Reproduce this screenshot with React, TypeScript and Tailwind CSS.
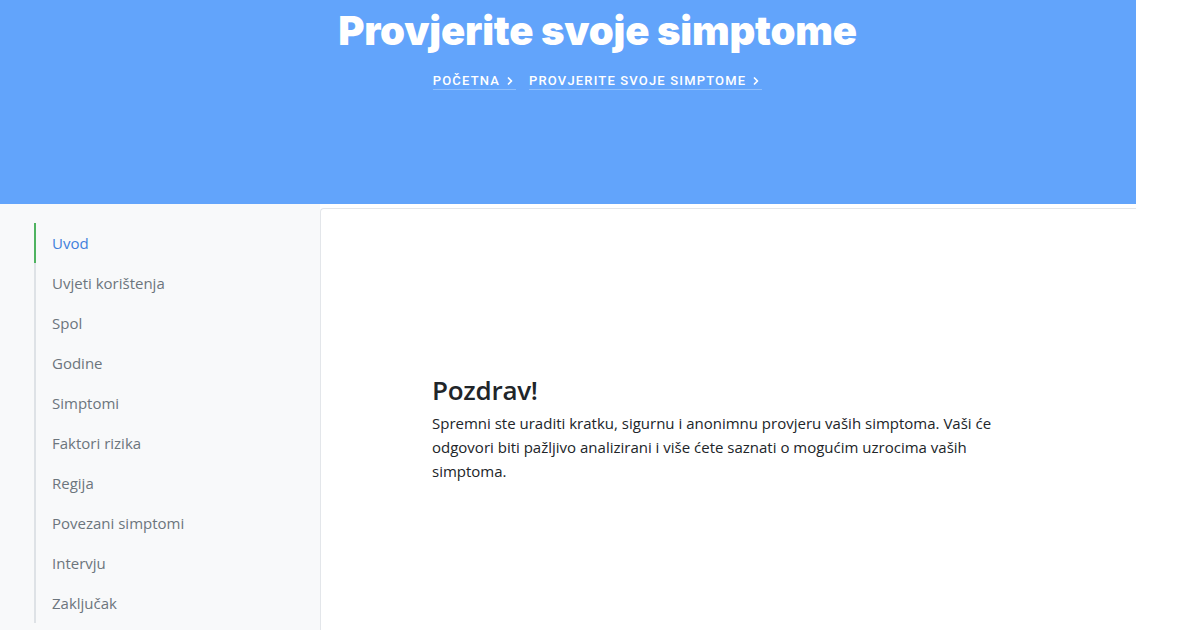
import { ChevronRight } from 'lucide-react'

const steps = [
  'Uvod',
  'Uvjeti korištenja',
  'Spol',
  'Godine',
  'Simptomi',
  'Faktori rizika',
  'Regija',
  'Povezani simptomi',
  'Intervju',
  'Zaključak',
]

function Crumb({ label }: { label: string }) {
  return (
    <a className="flex items-center gap-[4px] border-b border-[#8fbffc] pb-[1px] font-['Roboto',sans-serif] text-[13px] font-medium uppercase leading-[15px] tracking-[0.09em] text-white">
      {label}
      <ChevronRight size={12} strokeWidth={3.5} />
    </a>
  )
}

export default function App() {
  return (
    <div className="h-[630px] w-[1200px] overflow-hidden bg-white font-['Open_Sans',sans-serif]">
      <div className="w-[1136px]">
        <header className="flex h-[204px] flex-col items-center bg-[#62a4fb] pl-[59px] pt-[7px]">
          <h1 className="font-['Inter',sans-serif] text-[40px] font-black leading-[48px] tracking-[-0.005em] text-white">
            Provjerite svoje simptome
          </h1>
          <nav className="mt-[18px] flex items-center gap-[13px]">
            <Crumb label="Početna" />
            <Crumb label="Provjerite svoje simptome" />
          </nav>
        </header>

        <div className="flex">
          <aside className="h-[426px] w-[320px] shrink-0 bg-[#f8f9fa] pt-[19px]">
            <ul className="ml-[34px] border-l-2 border-[#dee2e6]">
              {steps.map((step, i) => (
                <li
                  key={step}
                  className={
                    i === 0
                      ? '-ml-[2px] flex h-10 items-center border-l-2 border-[#4fb360] pl-[16px] text-[15px] text-[#3f7fdc]'
                      : 'flex h-10 items-center pl-[16px] text-[15px] text-[#6c757d]'
                  }
                >
                  {step}
                </li>
              ))}
            </ul>
          </aside>

          <main className="mt-[4px] h-[430px] flex-1 rounded-tl-[4px] border border-r-0 border-[#e3e6ea] bg-white pl-[111px] pt-[164px]">
            <h2 className="text-[26px] font-semibold leading-[34px] tracking-[-0.01em] text-[#212529]">Pozdrav!</h2>
            <p className="mt-[4px] w-[580px] text-[15px] leading-[24px] text-[#212529]">
              Spremni ste uraditi kratku, sigurnu i anonimnu provjeru vaših simptoma. Vaši će
              odgovori biti pažljivo analizirani i više ćete saznati o mogućim uzrocima vaših
              simptoma.
            </p>
          </main>
        </div>
      </div>
    </div>
  )
}
